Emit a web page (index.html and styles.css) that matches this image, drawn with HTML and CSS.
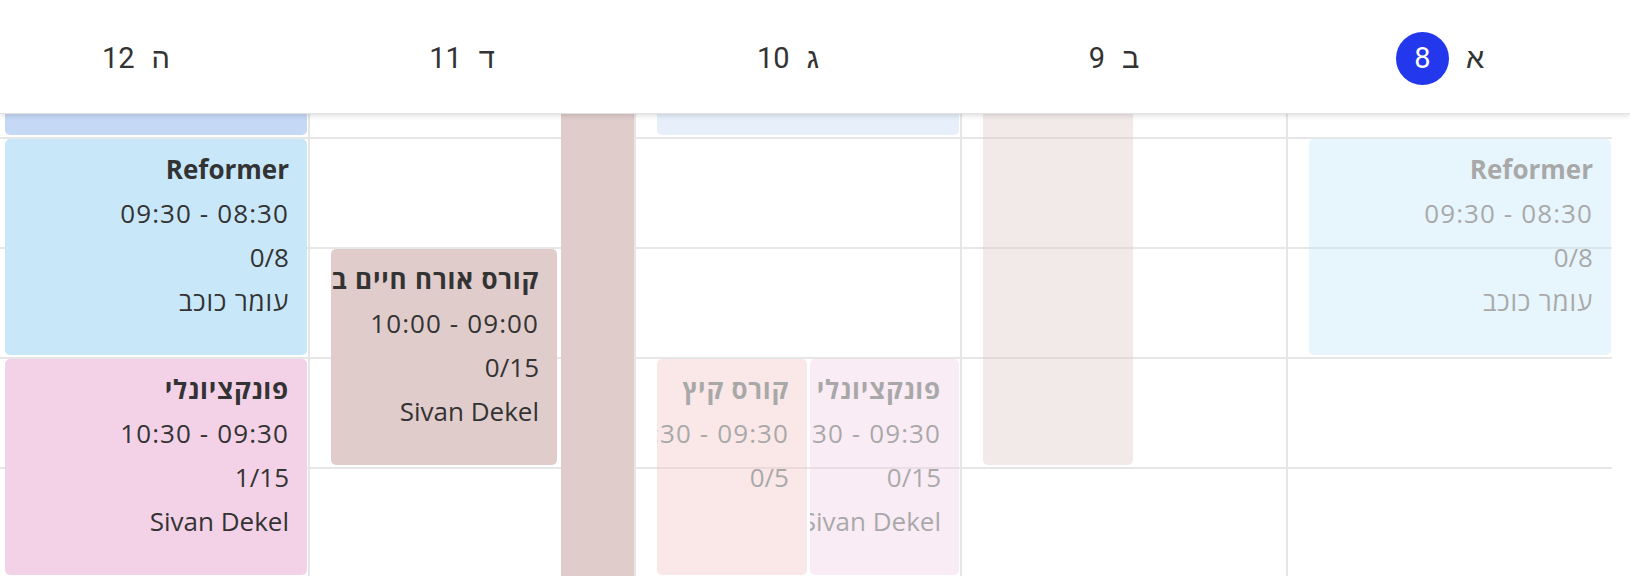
FILE: index.html
```html
<!DOCTYPE html>
<html lang="he" dir="rtl">
<head>
<meta charset="utf-8">
<title>לוח שבועי</title>
<link rel="stylesheet" href="styles.css">
</head>
<body>
<div class="calendar">
  <div class="week-head">
    <div class="day-head"><span class="dn">א</span><span class="num today">8</span></div>
    <div class="day-head"><span class="dn">ב</span><span class="num">9</span></div>
    <div class="day-head"><span class="dn">ג</span><span class="num">10</span></div>
    <div class="day-head"><span class="dn">ד</span><span class="num">11</span></div>
    <div class="day-head"><span class="dn">ה</span><span class="num">12</span></div>
  </div>
  <div class="week-body">
    <div class="days">
      <div class="day">
        <div class="ev blue past" style="top:112px;height:216px">
          <div class="title">Reformer</div>
          <div class="time">08:30 - 09:30</div>
          <div>0/8</div>
          <div class="he">עומר כוכב</div>
        </div>
      </div>
      <div class="day">
        <div class="ev rose past half-l" style="top:-218px;height:656px"></div>
      </div>
      <div class="day">
        <div class="ev peri past" style="top:-108px;height:216px"></div>
        <div class="ev red past half-l" style="top:332px;height:216px">
          <div class="title he">קורס קיץ</div>
          <div class="time">09:30 - 10:30</div>
          <div>0/5</div>
        </div>
        <div class="ev pink past half-r" style="top:332px;height:216px">
          <div class="title he">פונקציונלי</div>
          <div class="time">09:30 - 10:30</div>
          <div>0/15</div>
          <div>Sivan Dekel</div>
        </div>
      </div>
      <div class="day">
        <div class="ev rose wide" style="top:222px;height:216px">
          <div class="title he">קורס אורח חיים בריא</div>
          <div class="time">09:00 - 10:00</div>
          <div>0/15</div>
          <div>Sivan Dekel</div>
        </div>
        <div class="ev rose narrow" style="top:-300px;height:1000px"></div>
      </div>
      <div class="day">
        <div class="ev peri" style="top:-108px;height:216px"></div>
        <div class="ev blue" style="top:112px;height:216px">
          <div class="title">Reformer</div>
          <div class="time">08:30 - 09:30</div>
          <div>0/8</div>
          <div class="he">עומר כוכב</div>
        </div>
        <div class="ev pink" style="top:332px;height:216px">
          <div class="title he">פונקציונלי</div>
          <div class="time">09:30 - 10:30</div>
          <div>1/15</div>
          <div>Sivan Dekel</div>
        </div>
      </div>
    </div>
  </div>
</div>
</body>
</html>
```
FILE: styles.css
```css
html, body {
  margin: 0;
  padding: 0;
  background: #ffffff;
}

body {
  width: 1630px;
  height: 576px;
  overflow: hidden;
}

.calendar {
  width: 1630px;
  height: 576px;
  display: flex;
  flex-direction: column;
}

.week-head {
  direction: rtl;
  display: flex;
  flex: 0 0 113px;
  padding-right: 27px;
  background: #ffffff;
  position: relative;
  z-index: 2;
  overflow: hidden;
  box-shadow: 0 1px 0 #e2e2e2, 0 2px 6px rgba(0, 0, 0, 0.16);
  font-family: "Roboto", "Liberation Sans", "DejaVu Sans", sans-serif;
  font-size: 29px;
  color: #333333;
}

.day-head {
  flex: 0 0 326px;
  display: flex;
  align-items: center;
  justify-content: center;
  gap: 17px;
  padding-top: 3px;
}

.num {
  line-height: 1;
}

.num.today {
  width: 53px;
  height: 53px;
  border-radius: 50%;
  background: #2337ec;
  color: #ffffff;
  display: flex;
  align-items: center;
  justify-content: center;
}

.week-body {
  flex: 1 1 auto;
  margin-right: 18px;
  overflow: hidden;
  position: relative;
}

.days {
  direction: rtl;
  display: grid;
  grid-template-columns: repeat(5, 326px);
  height: 549px;
  margin-top: -86px;
  background-image: repeating-linear-gradient(to bottom, #e6e6e6 0, #e6e6e6 2px, transparent 2px, transparent 110px);
}

.day {
  position: relative;
  border-left: 2px solid #e6e6e6;
}

.ev {
  position: absolute;
  left: 21px;
  right: 1px;
  box-sizing: border-box;
  border-radius: 5px;
  padding: 8px 18px 0 0;
  overflow: hidden;
  white-space: nowrap;
  text-align: right;
  font-family: "Open Sans", "Liberation Sans", "DejaVu Sans", sans-serif;
  font-size: 26px;
  line-height: 44px;
  color: #333333;
}

.ev .title {
  font-weight: 700;
}

.ev .time {
  letter-spacing: 1.1px;
}

.ev .he {
  letter-spacing: 0.8px;
}

.ev.past {
  opacity: 0.42;
}

.ev.blue { background: #c8e8fa; }
.ev.peri { background: #c5d9f6; }
.ev.pink { background: #f3d2e8; }
.ev.rose { background: #e0cccb; }
.ev.red { background: #f5c8c8; }

.ev.half-l {
  right: 153px;
}

.ev.half-r {
  left: 174px;
}

.ev.wide {
  right: 77px;
}

.ev.narrow {
  left: 251px;
  right: 0;
  border-radius: 0;
}
```
